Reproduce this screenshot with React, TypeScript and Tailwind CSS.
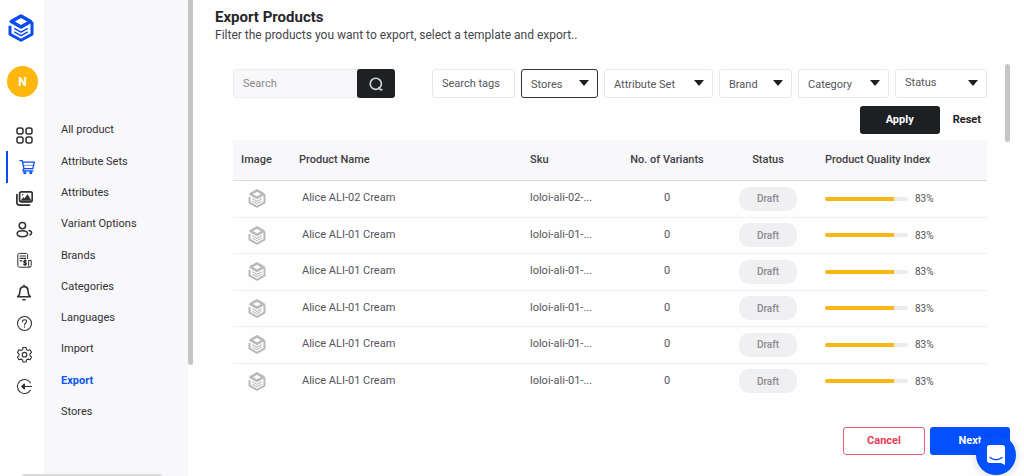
import React, { useState } from "react";

interface Product {
  id: number;
  name: string;
  sku: string;
  variants: number;
  status: string;
  quality: number;
}

const products: Product[] = [
  { id: 1, name: "Alice ALI-02 Cream", sku: "loloi-ali-02-...", variants: 0, status: "Draft", quality: 83 },
  { id: 2, name: "Alice ALI-01 Cream", sku: "loloi-ali-01-...", variants: 0, status: "Draft", quality: 83 },
  { id: 3, name: "Alice ALI-01 Cream", sku: "loloi-ali-01-...", variants: 0, status: "Draft", quality: 83 },
  { id: 4, name: "Alice ALI-01 Cream", sku: "loloi-ali-01-...", variants: 0, status: "Draft", quality: 83 },
  { id: 5, name: "Alice ALI-01 Cream", sku: "loloi-ali-01-...", variants: 0, status: "Draft", quality: 83 },
  { id: 6, name: "Alice ALI-01 Cream", sku: "loloi-ali-01-...", variants: 0, status: "Draft", quality: 83 },
];

const menuItems = [
  "All product",
  "Attribute Sets",
  "Attributes",
  "Variant Options",
  "Brands",
  "Categories",
  "Languages",
  "Import",
  "Export",
  "Stores",
];

const filters = [
  { label: "Stores", className: "w-[77px] border-[#33333b] pt-1" },
  { label: "Attribute Set", className: "w-[109px] border-[#e8e7ea] pt-1" },
  { label: "Brand", className: "w-[73px] border-[#e8e7ea] pt-1" },
  { label: "Category", className: "w-[91px] border-[#e8e7ea] pt-1" },
  { label: "Status", className: "w-[92px] border-[#e8e7ea]" },
];

const Logo = ({ className }: { className: string }) => (
  <svg viewBox="0 0 26 28" fill="none" stroke="currentColor" className={className}>
    <path d="M13 2 22.600 7.500 13 13 3.400 7.500Z" strokeWidth="3.600" strokeLinejoin="round" />
    <path d="M2 11.800v8.400l11 6 11-6V8" strokeWidth="3" strokeLinejoin="round" />
    <path d="M6.200 14.400 13 18.200l6.800-3.800M6.200 17.800l6.800 3.800 6.800-3.800" strokeWidth="1.500" />
  </svg>
);

// Icons of the left rail, in display order
const railIcons = [
  {
    label: "Dashboard",
    icon: (
      <g strokeWidth="1.500">
        <rect x="1" y="1" width="6" height="6" rx="2" />
        <rect x="10" y="1" width="6" height="6" rx="2" />
        <rect x="1" y="10" width="6" height="6" rx="2" />
        <rect x="10" y="10" width="6" height="6" rx="2" />
      </g>
    ),
  },
  {
    label: "Products",
    icon: (
      <g strokeWidth="1.300">
        <path d="M2 2.600h2.200L6 10.600h8.800l1.500-6.400H4.800" />
        <path d="M5.400 7.400h10" strokeWidth=".6" />
        <path d="M6 10.600 4.800 12.800h10.200" />
        <circle cx="6.800" cy="14.600" r="1" />
        <circle cx="12.800" cy="14.600" r="1" />
      </g>
    ),
  },
  {
    label: "Media",
    icon: (
      <g strokeWidth="1.700">
        <rect x="3.600" y="1.900" width="12.600" height="10" rx="1.600" />
        <path d="M.9 4.500v8c0 1.600.8 2.600 2.400 2.600H13.500" />
        <path d="m5 10.400 2.500-3 1.300 1.200 2.700-4 3.600 5.800Z" fill="currentColor" strokeWidth="0.600" />
        <circle cx="6.600" cy="4.800" r=".8" fill="currentColor" stroke="none" />
      </g>
    ),
  },
  {
    label: "Users",
    icon: (
      <g strokeWidth="1.500">
        <circle cx="6.400" cy="4.600" r="3.200" />
        <path d="M6.400 9.800c-3.200 0-5.200 1.200-5.200 3s2 2.900 5.200 2.900 5.200-1.100 5.200-2.900-2-3-5.200-3Z" />
        <path d="M13 9.400c1.800.4 2.600 1.300 2.600 2.400s-.6 1.700-1.600 2.200" />
      </g>
    ),
  },
  {
    label: "Invoices",
    icon: (
      <g strokeWidth="1">
        <path d="M11.600 6.600V3c0-1-.6-1.600-1.600-1.600H3.400c-1 0-1.600.6-1.600 1.600v10.400c0 1.200.6 1.800 1.800 1.800h9.800c1.200 0 1.800-.6 1.800-1.800V8.400h-2.600v5c0 1.200.4 1.800 1.200 1.800" />
        <path d="M4 4h5.600M4 6.400h5.600M4 8.800h1.800" strokeWidth="1.200" />
        <path d="M10.200 8.800c-1.600-.8-2.800.2-2.300 1.100.5.8 2 .6 2.400 1.500.4 1-1.200 1.700-2.600.8M9.100 7.800v5.600" strokeWidth="1.300" />
      </g>
    ),
  },
  {
    label: "Notifications",
    icon: (
      <g strokeWidth="1.600">
        <path d="M8 2.600c-2.600 0-4 1.900-4 4.300 0 3.200-.8 4.500-2.400 5.900h12.800C12.800 11.400 12 10.100 12 6.900c0-2.400-1.400-4.300-4-4.300ZM8 1.200v1.400" />
        <path d="M7 15.700h2" />
      </g>
    ),
  },
  {
    label: "Help",
    icon: (
      <g strokeWidth="1.100">
        <circle cx="8.500" cy="8.500" r="7" />
        <path d="M6.400 6.800c0-1.300.9-2.100 2.100-2.100s2.100.8 2.100 1.900c0 1.500-2.100 1.700-2.100 3.300M8.500 11.800v.4" />
      </g>
    ),
  },
  {
    label: "Settings",
    icon: (
      <g strokeWidth="1.100">
        <path d="M7 1.500h3l.5 2.100 1.500.9 2.100-.7 1.500 2.600-1.600 1.500v1.800l1.600 1.400-1.500 2.600-2.100-.6-1.500.8-.5 2.100H7l-.5-2.100-1.500-.8-2.100.6-1.500-2.600L3 9.700V7.900L1.400 6.400l1.500-2.600 2.100.7 1.500-.9Z" />
        <circle cx="8.500" cy="8.700" r="2.300" />
      </g>
    ),
  },
  {
    label: "Log out",
    icon: (
      <g strokeWidth="1.100">
        <path d="M14.400 4.800A7 7 0 1 0 14.400 12.200" />
        <path d="M15.600 8.500H6.200" />
        <path d="M8.400 6 5.800 8.500 8.400 11Z" fill="currentColor" />
      </g>
    ),
  },
];

const Sidebar: React.FC = () => {
  return (
    <aside className="relative flex shrink-0">
      {/* Icon rail */}
      <div className="w-11 bg-white pt-[14px]">
        <Logo className="ml-2 h-7 w-[26px] text-[#0b4cf0]" />
        <div className="mt-6 ml-[7px] flex h-[31px] w-[31px] items-center justify-center rounded-full bg-[#ffb70d] text-xs font-bold text-white">
          N
        </div>
        <nav className="mt-[23px] grid h-[282px] auto-rows-fr">
          {railIcons.map((item, index) => (
            <a
              key={item.label}
              href="#"
              aria-label={item.label}
              className={`ml-[6px] flex items-center border-l-2 ${
                index === 1 ? "border-[#0b4cf0] pl-[10px] text-[#0b4cf0]" : "border-transparent pl-2 text-[#303034]"
              }`}
            >
              <svg
                viewBox="0 0 17 17"
                fill="none"
                stroke="currentColor"
                strokeLinecap="round"
                strokeLinejoin="round"
                className="h-[17px] w-[17px]"
              >
                {item.icon}
              </svg>
            </a>
          ))}
        </nav>
      </div>

      {/* Product menu */}
      <div className="w-36 bg-[#f8f7f9] pt-[115px] pl-[17px]">
        <nav className="grid h-[313px] auto-rows-fr">
          {menuItems.map((item) => (
            <a
              key={item}
              href="#"
              className={`flex items-center text-[11px] ${
                item === "Export" ? "font-bold text-[#0b57f0]" : "text-[#303034]"
              }`}
            >
              {item}
            </a>
          ))}
        </nav>
      </div>
      <div className="h-[365px] w-[5px] rounded-b-full bg-[#c6c5c6]" />
      <div className="absolute bottom-0 left-[22px] h-[2px] w-[140px] rounded-t-full bg-[#dcdbdc]" />
    </aside>
  );
};

const FilterSelect = ({ label, className }: { label: string; className: string }) => (
  <div className="relative">
    <select
      aria-label={label}
      className={`h-[29px] appearance-none rounded-[3px] border bg-white pl-[9px] text-[11px] text-[#55555b] ${className}`}
    >
      <option>{label}</option>
    </select>
    <svg viewBox="0 0 10 6" className="pointer-events-none absolute top-[11px] right-[9px] h-[6px] w-[10px] fill-[#1d1f20]">
      <path d="M0 0h10L5 6Z" />
    </svg>
  </div>
);

const App: React.FC = () => {
  const [search, setSearch] = useState("");

  return (
    <div className="relative flex min-h-screen bg-[#fefefe] font-['Roboto',sans-serif]">
      <Sidebar />

      <main className="flex min-w-0 flex-1 flex-col pr-[14px] pb-[21px] pl-[22px]">
        <h1 className="mt-[7px] text-[15px] leading-5 font-bold text-[#28282c]">Export Products</h1>
        <p className="text-xs leading-4 text-[#46464b]">
          Filter the products you want to export, select a template and export..
        </p>

        <div className="mt-[21px] flex">
          <section className="min-w-0 flex-1 pt-[5px] pr-[18px] pl-[18px]">
            {/* Filters */}
            <div className="flex items-center gap-[6px]">
              <form className="mr-auto flex">
                <input
                  type="text"
                  aria-label="Search"
                  placeholder="Search"
                  value={search}
                  onChange={(e) => setSearch(e.target.value)}
                  className="h-[29px] w-[126px] rounded-l-[3px] border border-[#ecebed] bg-[#f8f7f9] pl-[9px] text-[11px] placeholder:text-[#8a898e]"
                />
                <button
                  type="button"
                  aria-label="Search products"
                  className="-ml-[2px] flex h-[29px] w-[38px] items-center justify-center rounded-[3px] bg-[#1d2123] text-[#d8d8d8]"
                >
                  <svg viewBox="0 0 14 14" fill="none" stroke="currentColor" className="h-[14px] w-[14px]">
                    <circle cx="6.800" cy="6.800" r="5.600" strokeWidth="1.600" />
                    <path d="m9.500 10 2.200 2.900 1.800-.3" strokeWidth="1.500" />
                  </svg>
                </button>
              </form>
              <input
                type="text"
                aria-label="Search tags"
                placeholder="Search tags"
                className="h-[29px] w-[83px] rounded-[3px] border border-[#e8e7ea] bg-white pl-[9px] text-[11px] placeholder:text-[#55555b]"
              />
              {filters.map((filter) => (
                <FilterSelect key={filter.label} label={filter.label} className={filter.className} />
              ))}
            </div>

            <div className="mt-2 flex justify-end pr-[6px]">
              <button className="h-7 w-20 rounded-[3px] bg-[#1d2022] text-[11px] font-bold text-white">
                Apply
              </button>
              <button className="ml-[13px] text-[11px] font-bold text-[#1d2022]">Reset</button>
            </div>

            {/* Products */}
            <table className="mt-[6px] w-full table-fixed border-collapse text-[11px] text-[#55555b]">
              <thead>
                <tr className="h-10 border-b border-[#dddce0] bg-[#f8f7f9] text-left text-[#404045]">
                  <th className="w-[47px] text-center font-medium">Image</th>
                  <th className="pl-[19px] font-medium">Product Name</th>
                  <th className="w-24 pl-[9px] font-medium">Sku</th>
                  <th className="w-[100px] text-center font-medium">No. of Variants</th>
                  <th className="w-[102px] text-center font-medium">Status</th>
                  <th className="w-[168px] pl-[6px] font-medium">Product Quality Index</th>
                </tr>
              </thead>
              <tbody>
                {products.map((product) => (
                  <tr key={product.id} className="h-[37px] border-b border-[#f0eff2] last:border-0 even:h-9">
                    <td>
                      <Logo className="mx-auto h-[19px] w-[18px] text-[#b9b8bb]" />
                    </td>
                    <td className="pl-[22px]">{product.name}</td>
                    <td className="pl-[9px]">{product.sku}</td>
                    <td className="text-center">{product.variants}</td>
                    <td>
                      <span className="mx-auto flex h-6 w-[58px] items-center justify-center rounded-[10px] bg-[#f0eff1] text-[10px] font-medium text-[#8c8b90]">
                        {product.status}
                      </span>
                    </td>
                    <td className="pl-[6px]">
                      <div className="flex items-center gap-[7px] text-[10px]">
                        <div className="h-1 w-[83px] overflow-hidden rounded-full bg-[#ececee]">
                          <div className="h-full bg-[#fbb716]" style={{ width: `${product.quality}%` }} />
                        </div>
                        {product.quality}%
                      </div>
                    </td>
                  </tr>
                ))}
              </tbody>
            </table>
          </section>
          <div className="h-[78px] w-[5px] rounded-full bg-[#c6c5c8]" />
        </div>

        {/* Footer actions */}
        <div className="mt-auto flex justify-end gap-[5px] text-[11px] font-bold">
          <button className="h-7 w-[82px] rounded-[3px] border border-[#ee5a70] bg-white text-[#ea3a55]">
            Cancel
          </button>
          <button className="h-7 w-20 rounded-[3px] bg-[#0350ff] text-white">Next</button>
        </div>
      </main>

      {/* Chat launcher */}
      <button
        aria-label="Open chat"
        className="fixed right-2 bottom-[1px] flex h-10 w-10 items-center justify-center rounded-full bg-[#0350ff] shadow-[0_1px_10px_rgba(0,0,0,0.15)]"
      >
        <svg viewBox="0 0 18 20" className="h-5 w-[18px]">
          <path d="M2.500 0h13C17 0 18 1 18 2.500V20l-4-2H2.500C1 18 0 17 0 15.500v-13C0 1 1 0 2.500 0Z" fill="#fff" />
          <path d="M3 12.500c3.500 3 8.500 3 12 0" fill="none" stroke="#0350ff" strokeWidth="1.300" strokeLinecap="round" />
        </svg>
      </button>
    </div>
  );
};

export default App;
